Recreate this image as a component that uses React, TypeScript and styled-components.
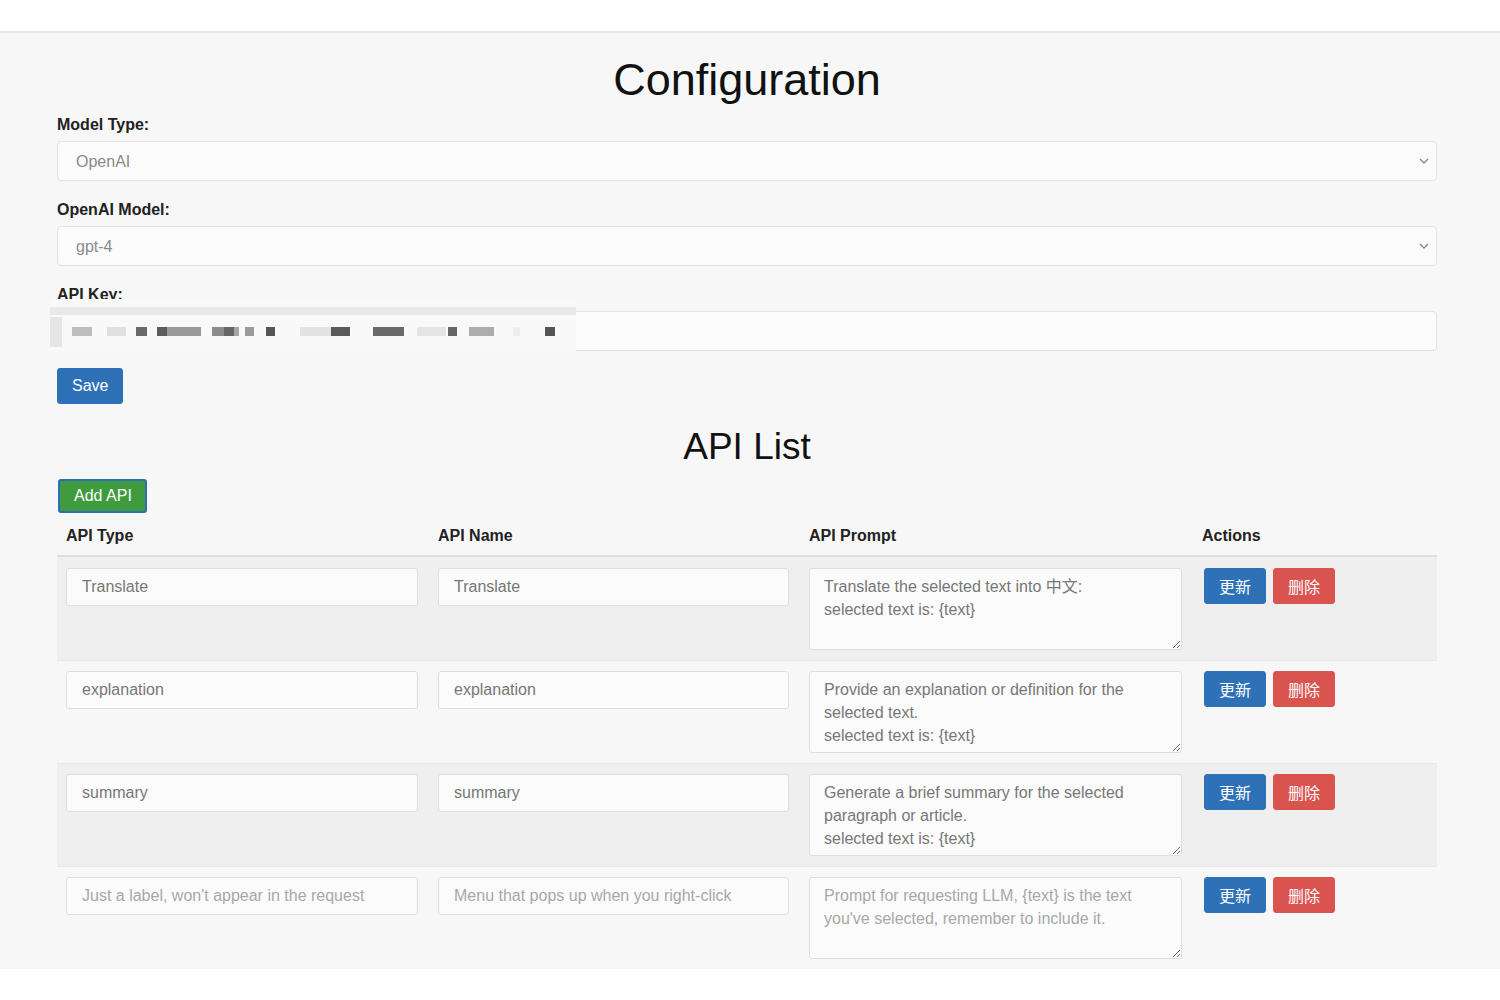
import * as React from "react";
import styled, { createGlobalStyle } from "styled-components";

const GlobalStyle = createGlobalStyle`
  body {
    margin: 0;
    background: #ffffff;
    font-family: "Liberation Sans", Helvetica, Arial, sans-serif;
    color: #222;
  }
  * {
    box-sizing: border-box;
  }
`;

type Api = {
  type: string;
  name: string;
  prompt: string;
};

const apis: Api[] = [
  {
    type: "Translate",
    name: "Translate",
    prompt: "Translate the selected text into 中文:\nselected text is: {text}",
  },
  {
    type: "explanation",
    name: "explanation",
    prompt:
      "Provide an explanation or definition for the selected text.\nselected text is: {text}",
  },
  {
    type: "summary",
    name: "summary",
    prompt:
      "Generate a brief summary for the selected paragraph or article.\nselected text is: {text}",
  },
];

// pixelated blocks of the hidden key: [x, width, colour]
const keyBlocks: [number, number, string][] = [
  [22, 20, "#bdbdbd"],
  [57, 19, "#e0e0e0"],
  [86, 11, "#6a6a6a"],
  [107, 10, "#5c5c5c"],
  [117, 34, "#9a9a9a"],
  [162, 12, "#8c8c8c"],
  [174, 10, "#666"],
  [184, 5, "#a5a5a5"],
  [195, 9, "#9b9b9b"],
  [216, 9, "#555"],
  [250, 31, "#e2e2e2"],
  [281, 19, "#5a5a5a"],
  [323, 31, "#6a6a6a"],
  [367, 29, "#e4e4e4"],
  [398, 9, "#666"],
  [419, 25, "#adadad"],
  [463, 7, "#eeeeee"],
  [495, 10, "#555"],
];

function Chevron() {
  return (
    <ChevronIcon width="10" height="6" viewBox="0 0 10 6">
      <path d="M1 1l4 4 4-4" fill="none" stroke="#8a8a8a" strokeWidth="1.4" />
    </ChevronIcon>
  );
}

function Redaction() {
  return (
    <RedactSvg width="526" height="53" viewBox="0 0 526 53">
      <rect x="0" y="0" width="526" height="53" fill="#f9f9f9" />
      <rect x="0" y="8" width="526" height="8" fill="#e9e9e9" />
      <rect x="0" y="18" width="12" height="30" fill="#e5e5e5" />
      {keyBlocks.map(([x, w, c], i) => (
        <rect key={i} x={x} y="28" width={w} height="9" fill={c} />
      ))}
    </RedactSvg>
  );
}

export default function App() {
  return (
    <>
      <GlobalStyle />
      <TopBar />
      <Panel>
        <Title>Configuration</Title>

        <Field>
          <Label>Model Type:</Label>
          <SelectBox>
            <Select defaultValue="openai">
              <option value="openai">OpenAI</option>
            </Select>
            <Chevron />
          </SelectBox>
        </Field>

        <Field>
          <Label>OpenAI Model:</Label>
          <SelectBox>
            <Select defaultValue="gpt-4">
              <option value="gpt-4">gpt-4</option>
            </Select>
            <Chevron />
          </SelectBox>
        </Field>

        <KeyField>
          <Label>API Key:</Label>
          <TextInput type="text" defaultValue="" />
          <Redaction />
        </KeyField>

        <Button $color="#2f71b7">Save</Button>

        <SectionTitle>API List</SectionTitle>

        <AddButton>Add API</AddButton>

        <Table>
          <HeadRow>
            <HeadCell>API Type</HeadCell>
            <HeadCell>API Name</HeadCell>
            <HeadCell>API Prompt</HeadCell>
            <HeadCell>Actions</HeadCell>
          </HeadRow>
          {apis.map((api, i) => (
            <Row key={api.name} $striped={i % 2 === 0}>
              <Cell>
                <CellInput defaultValue={api.type} />
              </Cell>
              <Cell>
                <CellInput defaultValue={api.name} />
              </Cell>
              <Cell>
                <Prompt defaultValue={api.prompt} />
              </Cell>
              <Actions>
                <Button $color="#2f71b7">更新</Button>
                <Button $color="#d9534f">删除</Button>
              </Actions>
            </Row>
          ))}
          <Row $striped={false}>
            <Cell>
              <CellInput placeholder="Just a label, won't appear in the request" />
            </Cell>
            <Cell>
              <CellInput placeholder="Menu that pops up when you right-click" />
            </Cell>
            <Cell>
              <Prompt placeholder="Prompt for requesting LLM, {text} is the text you've selected, remember to include it." />
            </Cell>
            <Actions>
              <Button $color="#2f71b7">更新</Button>
              <Button $color="#d9534f">删除</Button>
            </Actions>
          </Row>
        </Table>
      </Panel>
    </>
  );
}

const TopBar = styled.div`
  height: 31px;
  background: #ffffff;
`;

const Panel = styled.main`
  background: #f7f7f7;
  border-top: 2px solid #e8e8e8;
  padding: 20px 63px 0 57px;
`;

const Title = styled.h1`
  margin: 0 0 8px;
  font-size: 45px;
  line-height: 54px;
  font-weight: 400;
  text-align: center;
  color: #111;
`;

const Field = styled.div`
  display: flex;
  flex-direction: column;
  margin-bottom: 19px;
`;

const KeyField = styled(Field)`
  position: relative;
  margin-bottom: 17px;
`;

const Label = styled.label`
  font-size: 16px;
  line-height: 20px;
  font-weight: 700;
  color: #222;
  margin-bottom: 6px;
`;

const SelectBox = styled.div`
  position: relative;
`;

const Select = styled.select`
  width: 100%;
  height: 40px;
  appearance: none;
  border: 1px solid #e3e3e3;
  border-radius: 4px;
  background: #fbfbfb;
  padding: 0 18px;
  font-family: inherit;
  font-size: 16px;
  color: #8a8a8a;
  outline: none;
`;

const ChevronIcon = styled.svg`
  position: absolute;
  right: 8px;
  top: 17px;
  pointer-events: none;
`;

const TextInput = styled.input`
  width: 100%;
  height: 40px;
  border: 1px solid #e3e3e3;
  border-radius: 4px;
  background: #fbfbfb;
  padding: 0 18px;
  font-family: inherit;
  font-size: 16px;
  color: #555;
  outline: none;
`;

const RedactSvg = styled.svg`
  position: absolute;
  left: -7px;
  top: 14px;
  display: block;
`;

const Button = styled.button<{ $color: string }>`
  display: inline-flex;
  align-items: center;
  justify-content: center;
  height: 36px;
  padding: 0 14px;
  border: 1px solid ${(p) => p.$color};
  border-radius: 3px;
  background: ${(p) => p.$color};
  color: #fff;
  font-family: "Liberation Sans", "Noto Sans CJK SC", sans-serif;
  font-size: 16px;
  cursor: pointer;
`;

const SectionTitle = styled.h2`
  margin: 21px 0 10px;
  font-size: 37px;
  line-height: 44px;
  font-weight: 400;
  text-align: center;
  color: #111;
`;

const AddButton = styled.button`
  height: 34px;
  margin-left: 1px;
  padding: 0 13px 0 14px;
  border: 2px solid #2d6db4;
  border-radius: 3px;
  background: #3e9b3e;
  color: #fff;
  font-family: inherit;
  font-size: 16px;
  cursor: pointer;
`;

const Table = styled.div`
  margin-top: 4px;
  display: flex;
  flex-direction: column;
`;

const HeadRow = styled.div`
  display: grid;
  grid-template-columns: 372px 371px 393px 1fr;
  border-bottom: 2px solid #dddddd;
`;

const HeadCell = styled.div`
  padding: 8px 10px 8px 9px;
  font-size: 16px;
  line-height: 22px;
  font-weight: 700;
  color: #222;
`;

const Row = styled.div<{ $striped: boolean }>`
  display: grid;
  grid-template-columns: 372px 371px 393px 1fr;
  border-top: 1px solid #e7e7e7;
  padding: 10px 0;
  background: ${(p) => (p.$striped ? "#efefef" : "transparent")};
  &:nth-child(2) {
    border-top: none;
    padding-top: 11px;
  }
`;

const Cell = styled.div`
  padding: 0 11px 0 9px;
`;

const Actions = styled(Cell)`
  display: flex;
  align-items: flex-start;
  gap: 7px;
  padding-left: 11px;
`;

const CellInput = styled.input`
  width: 100%;
  height: 38px;
  border: 1px solid #dedede;
  border-radius: 3px;
  background: #fbfbfb;
  padding: 0 15px;
  font-family: inherit;
  font-size: 16px;
  color: #777;
  outline: none;
  &::placeholder {
    color: #a8a8a8;
  }
`;

const Prompt = styled.textarea`
  display: block;
  width: 100%;
  height: 82px;
  border: 1px solid #dedede;
  border-radius: 3px;
  background: #fbfbfb;
  padding: 6px 14px;
  font-family: "Liberation Sans", "Noto Sans CJK SC", sans-serif;
  font-size: 16px;
  line-height: 23px;
  color: #777;
  overflow: hidden;
  resize: vertical;
  outline: none;
  &::placeholder {
    color: #a8a8a8;
  }
`;
